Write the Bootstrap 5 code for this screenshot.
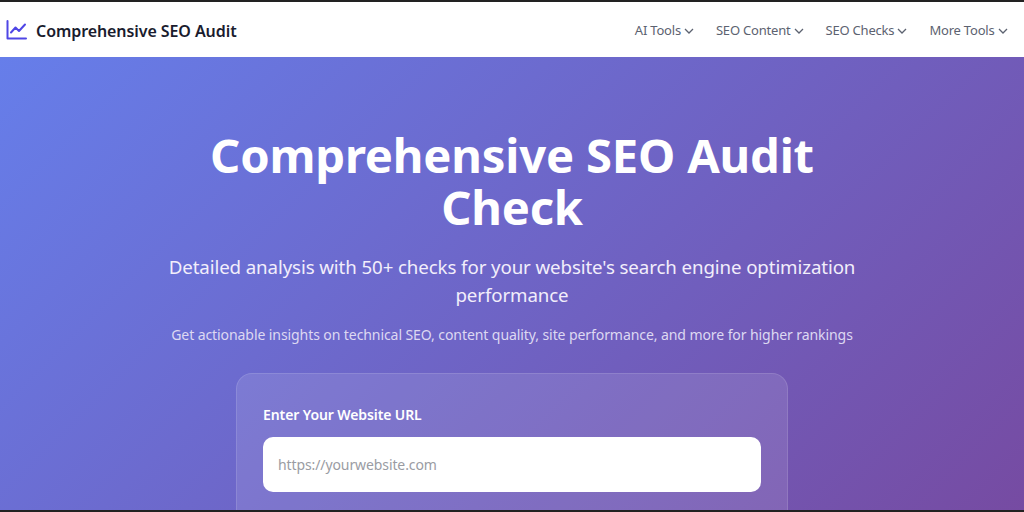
<!DOCTYPE html>
<html lang="en"><head><meta charset="utf-8">
<link href="https://cdn.jsdelivr.net/npm/bootstrap@5.3.0/dist/css/bootstrap.min.css" rel="stylesheet">
<style>
html,body{height:512px;overflow:hidden}
body{font-family:"Noto Sans",sans-serif;background:#222;padding:2px 0;display:flex;flex-direction:column}
.topbar{height:55px;flex:none;background:#fff;padding:0 16.500px 0 6px}
.brandtxt{font-size:16px;font-weight:600;color:#1a1c2e;letter-spacing:-.08px;padding-top:2px}
.toplink{display:block;font-size:13px;color:#5c6270;padding:2px 0 0;letter-spacing:-.2px}
.toplink svg{margin-left:3px}
.topnav{gap:22px}
.hero{flex:1;min-height:0;overflow:hidden;background:linear-gradient(135deg,#667eea 0%,#764ba2 100%);color:#fff;padding-top:72px}
.herotitle{font-size:47.200px;line-height:52px;font-weight:700;margin:0 auto 20px;width:660px;letter-spacing:-.2px}
.herosub{font-size:18.700px;line-height:28px;width:720px;margin:0 auto 15px;color:#f2eefb;letter-spacing:-.1px}
.heronote{font-size:14.050px;line-height:22px;color:#ddd8f2;margin-bottom:27px;letter-spacing:-.1px}
.panel{width:552px;height:200px;margin:0 auto;background:rgba(255,255,255,.11);border:1px solid rgba(255,255,255,.12);border-radius:16px;padding:31px 26px 0}
.fieldlabel{font-size:14px;font-weight:600;display:block;margin-bottom:12px;letter-spacing:-.1px;line-height:20px}
.urlbox.form-control{height:55px;border:0;border-radius:10px;font-size:14px;padding:0 15px;letter-spacing:-.1px}
.urlbox::placeholder{color:#9a9ca3;opacity:1}
</style></head><body>
<nav class="topbar d-flex align-items-center justify-content-between">
<a class="d-flex align-items-center gap-2 text-decoration-none" href="#">
<svg width="22" height="22" viewBox="0 0 22 22" fill="none" stroke="#4f46e5" stroke-width="2" stroke-linecap="round" stroke-linejoin="round"><path d="M1.500 2v17.500h18.500"/><path d="M5 13.500l4.500-5 3.500 3.500 6-6.500"/></svg>
<span class="brandtxt">Comprehensive SEO Audit</span></a>
<div class="d-flex align-items-center topnav">
<a class="toplink text-decoration-none" href="#">AI Tools<svg width="10" height="6" viewBox="0 0 10 6" fill="none" stroke="#5c6270" stroke-width="1.300"><path d="M1 1l4 4 4-4"/></svg></a>
<a class="toplink text-decoration-none" href="#">SEO Content<svg width="10" height="6" viewBox="0 0 10 6" fill="none" stroke="#5c6270" stroke-width="1.300"><path d="M1 1l4 4 4-4"/></svg></a>
<a class="toplink text-decoration-none" href="#">SEO Checks<svg width="10" height="6" viewBox="0 0 10 6" fill="none" stroke="#5c6270" stroke-width="1.300"><path d="M1 1l4 4 4-4"/></svg></a>
<a class="toplink text-decoration-none" href="#">More Tools<svg width="10" height="6" viewBox="0 0 10 6" fill="none" stroke="#5c6270" stroke-width="1.300"><path d="M1 1l4 4 4-4"/></svg></a>
</div></nav>
<main class="hero text-center">
<h1 class="herotitle">Comprehensive SEO Audit Check</h1>
<p class="herosub">Detailed analysis with 50+ checks for your website's search engine optimization performance</p>
<p class="heronote">Get actionable insights on technical SEO, content quality, site performance, and more for higher rankings</p>
<div class="panel text-start">
<label class="fieldlabel" for="u">Enter Your Website URL</label>
<input id="u" class="form-control urlbox" type="text" placeholder="https://yourwebsite.com">
</div>
</main>
<script src="https://cdn.jsdelivr.net/npm/bootstrap@5.3.0/dist/js/bootstrap.bundle.min.js"></script>
</body></html>
